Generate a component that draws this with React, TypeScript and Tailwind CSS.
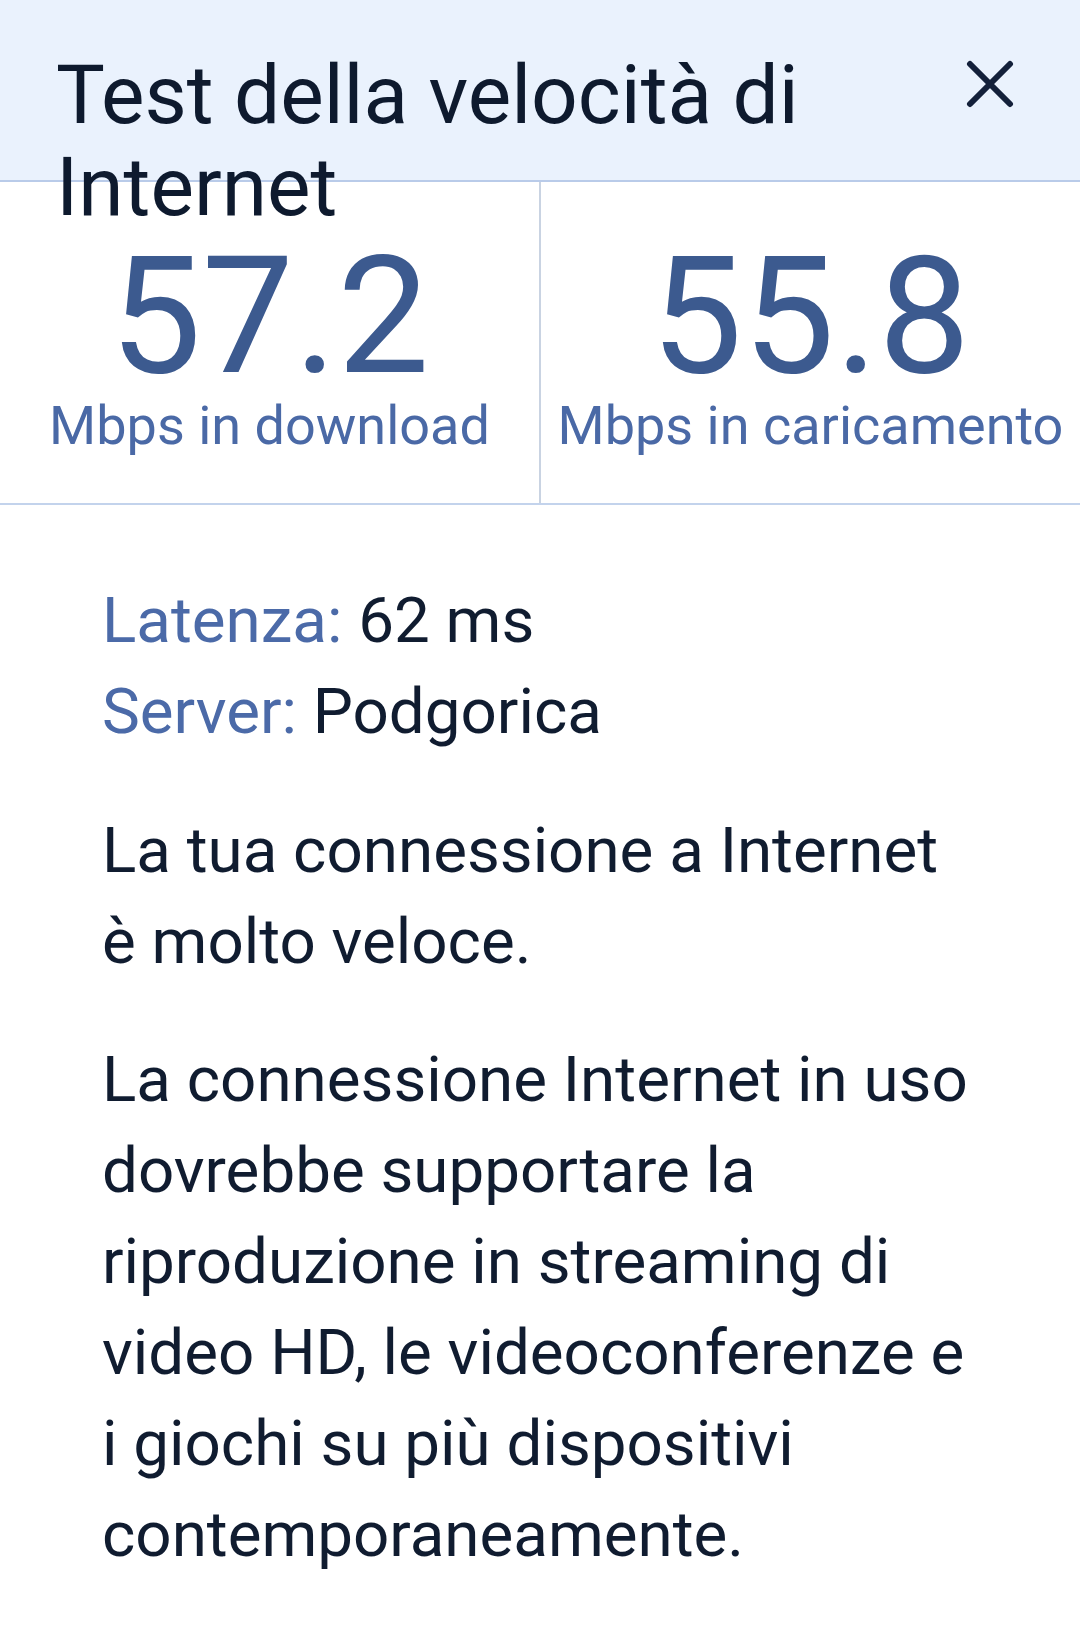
export default function App() {
  return (
    <div className="w-[1080px] min-h-[1628px] bg-white font-['Roboto',sans-serif] overflow-hidden">
      <header className="relative z-10 h-[182px] bg-[#eaf2fd] border-b-2 border-[#b9cbe9] flex justify-between items-start pl-[56px] pr-[66px] pt-[49px]">
        <h1 className="w-[860px] text-[82px] leading-[92px] text-[#0e1a2e] font-normal">
          Test della velocità di Internet
        </h1>
        <button className="mt-[11px] w-[48px] h-[48px] flex items-center justify-center" aria-label="Chiudi">
          <svg width="48" height="48" viewBox="0 0 48 48" fill="none">
            <path d="M4 4 L44 44 M44 4 L4 44" stroke="#13203a" strokeWidth="6" strokeLinecap="round" />
          </svg>
        </button>
      </header>

      <section className="flex h-[323px] border-b-2 border-[#c3d3ec]">
        <div className="flex-1 border-r-2 border-[#c9d3e2] flex flex-col items-center pt-[64px]">
          <div className="text-[164px] leading-[140px] text-[#3c5a8f]">57.2</div>
          <div className="mt-[8px] text-[54px] leading-[64px] text-[#4a69a6] whitespace-nowrap">Mbps in download</div>
        </div>
        <div className="flex-1 flex flex-col items-center pt-[64px]">
          <div className="text-[164px] leading-[140px] text-[#3c5a8f]">55.8</div>
          <div className="mt-[8px] text-[54px] leading-[64px] text-[#4a69a6] whitespace-nowrap">Mbps in caricamento</div>
        </div>
      </section>

      <main className="px-[102px] pt-[70px] text-[63.7px] leading-[91px] text-[#101c30]">
        <div>
          <span className="text-[#4b6aa8]">Latenza:</span> 62 ms
        </div>
        <div>
          <span className="text-[#4b6aa8]">Server:</span> Podgorica
        </div>
        <p className="mt-[48px] whitespace-nowrap">
          La tua connessione a Internet
          <br />è molto veloce.
        </p>
        <p className="mt-[47px] whitespace-nowrap">
          La connessione Internet in uso
          <br />
          dovrebbe supportare la
          <br />
          riproduzione in streaming di
          <br />
          video HD, le videoconferenze e
          <br />
          i giochi su più dispositivi
          <br />
          contemporaneamente.
        </p>
      </main>
    </div>
  );
}
